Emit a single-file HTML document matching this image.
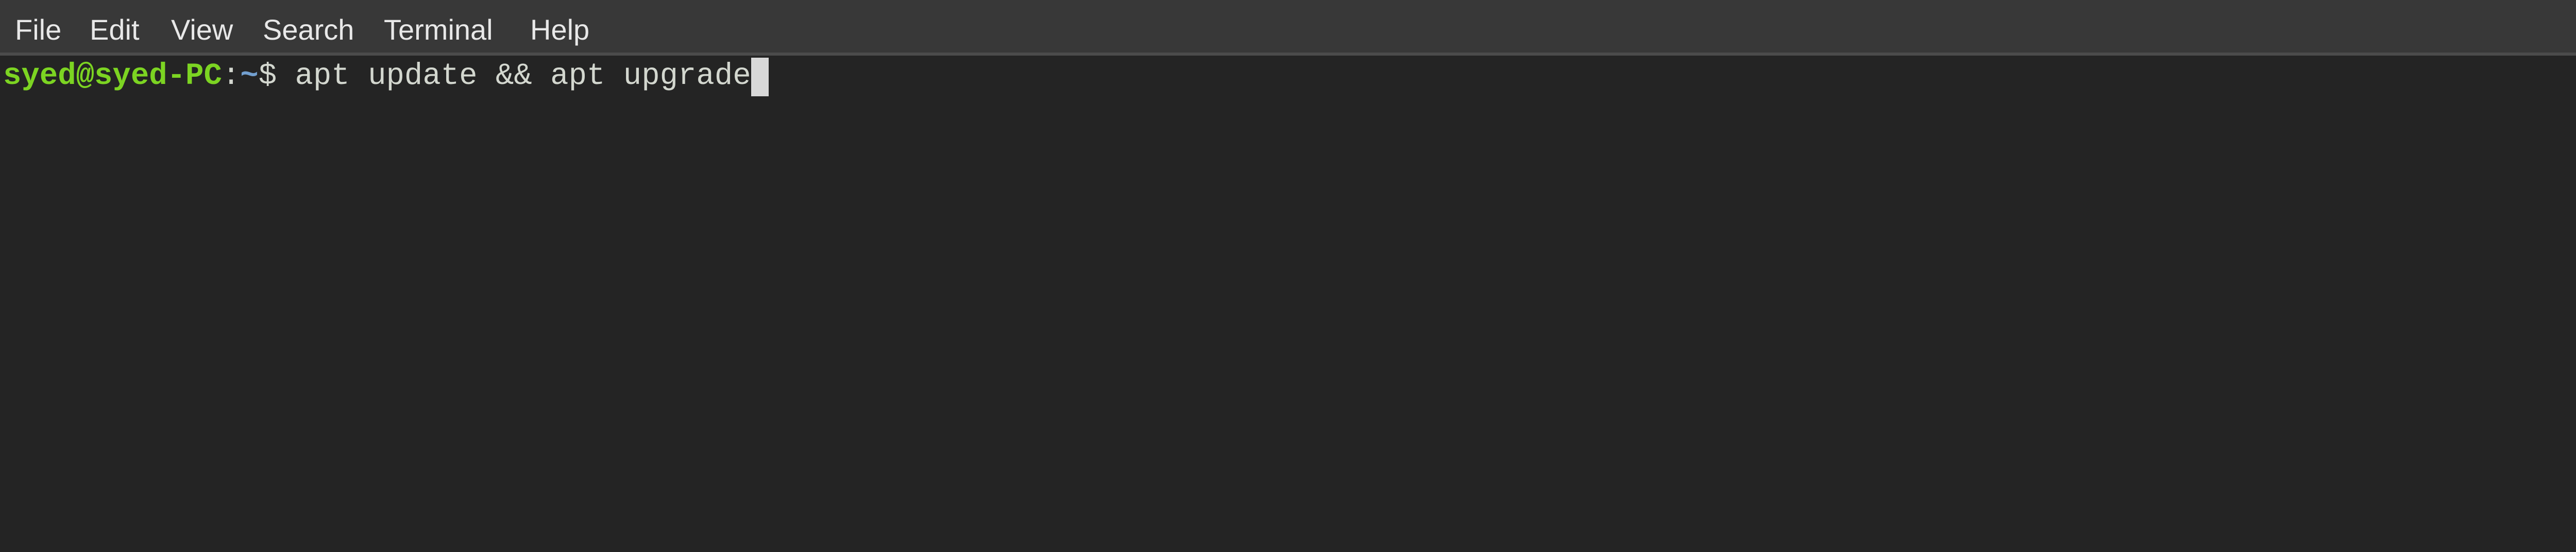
<!DOCTYPE html>
<html><head><meta charset="utf-8"><style>
html,body{margin:0;padding:0;width:6076px;height:1072px;overflow:hidden;background:#242424}
#menu{position:absolute;left:0;top:0;width:6076px;height:102px;background:#383838}
#line{position:absolute;left:0;top:102px;width:6076px;height:6px;background:#4b4b4b}
.m{position:absolute;top:26px;font-family:"Liberation Sans",sans-serif;font-size:56px;color:#e8e8e8;line-height:64px;white-space:nowrap}
#term{position:absolute;left:6px;top:108px;font-family:"Liberation Mono",monospace;font-size:59px;line-height:80px;color:#d3d7cf;white-space:pre}
.g{color:#7cd422;font-weight:bold}
.b{color:#729fcf;font-weight:bold}
.cur{display:inline-block;width:34px;height:75px;background:#d8d8d8;vertical-align:top;margin-top:4px}
#sb{position:absolute;left:6045px;top:120px;width:18px;height:930px;background:#7b7b7b;border-radius:9px}
</style></head><body>
<div id="menu"></div><div id="line"></div>
<div class="m" style="left:29px">File</div>
<div class="m" style="left:174px">Edit</div>
<div class="m" style="left:332px">View</div>
<div class="m" style="left:510px">Search</div>
<div class="m" style="left:745px">Terminal</div>
<div class="m" style="left:1029px">Help</div>
<div id="term"><span class="g">syed@syed-PC</span>:<span class="b">~</span>$ apt update &amp;&amp; apt upgrade<span class="cur"></span></div>
<div id="sb"></div>
</body></html>
